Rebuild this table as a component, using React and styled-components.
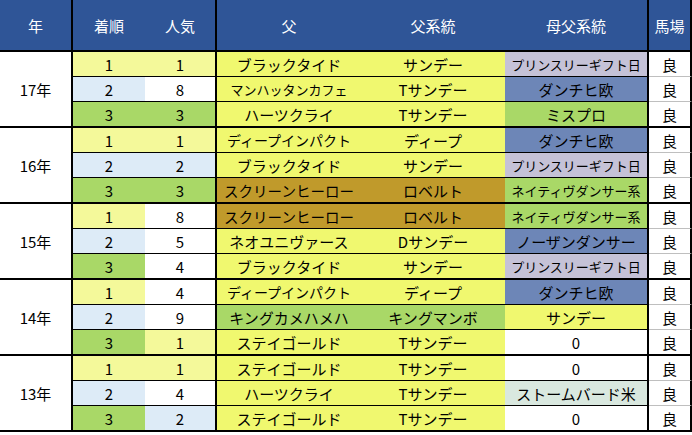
import React from 'react';
import styled, { createGlobalStyle } from 'styled-components';

const GlobalStyle = createGlobalStyle`
  html, body { margin: 0; padding: 0; background: #ffffff; }
  body { font-family: "Noto Sans CJK JP", "Noto Sans", sans-serif; }
`;

const C = {
  ly: '#F4F99A',
  y: '#F0F86F',
  lb: '#DDEBF7',
  g: '#A9D867',
  lav: '#C5C2D7',
  steel: '#6D86B7',
  gold: '#C09A2B',
  pg: '#D9E8DF',
  w: '#FFFFFF',
};

const COLS = '72px 72px 144px 144px 144px 43px';

const Sheet = styled.div`
  width: 692px;
  display: flex;
  flex-direction: column;
  color: #000;
  font-size: 15px;
  background: #fff;
`;

const HeaderRow = styled.div`
  display: grid;
  grid-template-columns: 73px ${COLS};
  height: 52px;
  box-sizing: border-box;
  border-bottom: 2px solid #000;
  background: #2F5597;
`;

const HeadCell = styled.div`
  display: flex;
  align-items: center;
  justify-content: center;
  color: #ffffff;
  font-size: 15px;
  box-sizing: border-box;
  border-right: ${(p) => (p.$edge ? '2px solid #000' : 'none')};
`;

const Group = styled.div`
  display: flex;
  height: 76px;
  box-sizing: border-box;
  border-bottom: 2px solid #000;
`;

const YearCell = styled.div`
  flex: none;
  width: 73px;
  box-sizing: border-box;
  border-right: 2px solid #000;
  background: #fff;
  display: flex;
  align-items: center;
  justify-content: center;
  font-size: 15px;
`;

const Rows = styled.div`
  flex: 1;
  display: flex;
  flex-direction: column;
`;

const Row = styled.div`
  display: grid;
  grid-template-columns: ${COLS};
  height: ${(p) => (p.$last ? 24 : 25)}px;
`;

const Cell = styled.div`
  box-sizing: border-box;
  display: flex;
  align-items: center;
  justify-content: center;
  white-space: nowrap;
  overflow: hidden;
  background: ${(p) => p.$bg};
  font-size: ${(p) => p.$size || 15}px;
  border-bottom: ${(p) => (p.$last ? 'none' : `1px solid ${p.$line || '#000'}`)};
  border-right: ${(p) => (p.$edge ? '2px solid #000' : 'none')};
`;

const headers = [
  { t: '年', edge: true },
  { t: '着順' },
  { t: '人気', edge: true },
  { t: '父' },
  { t: '父系統' },
  { t: '母父系統', edge: true },
  { t: '馬場', edge: true },
];

// [着順, bg], [人気, bg], [父, bg, size], [父系統, bg], [母父系統, bg, size]
const data = [
  {
    year: '17年',
    rows: [
      [['1', 'ly'], ['1', 'ly'], ['ブラックタイド', 'y'], ['サンデー', 'y'], ['プリンスリーギフト日', 'lav', 13]],
      [['2', 'lb'], ['8', 'w'], ['マンハッタンカフェ', 'y', 13], ['Tサンデー', 'y'], ['ダンチヒ欧', 'steel']],
      [['3', 'g'], ['3', 'g'], ['ハーツクライ', 'y'], ['Tサンデー', 'y'], ['ミスプロ', 'g']],
    ],
  },
  {
    year: '16年',
    rows: [
      [['1', 'ly'], ['1', 'ly'], ['ディープインパクト', 'y', 14], ['ディープ', 'y'], ['ダンチヒ欧', 'steel']],
      [['2', 'lb'], ['2', 'lb'], ['ブラックタイド', 'y'], ['サンデー', 'y'], ['プリンスリーギフト日', 'lav', 13]],
      [['3', 'g'], ['3', 'g'], ['スクリーンヒーロー', 'gold', 14.5], ['ロベルト', 'gold'], ['ネイティヴダンサー系', 'g', 13]],
    ],
  },
  {
    year: '15年',
    rows: [
      [['1', 'ly'], ['8', 'w'], ['スクリーンヒーロー', 'gold', 14.5], ['ロベルト', 'gold'], ['ネイティヴダンサー系', 'g', 13]],
      [['2', 'lb'], ['5', 'w'], ['ネオユニヴァース', 'y'], ['Dサンデー', 'y'], ['ノーザンダンサー', 'steel']],
      [['3', 'g'], ['4', 'w'], ['ブラックタイド', 'y'], ['サンデー', 'y'], ['プリンスリーギフト日', 'lav', 13]],
    ],
  },
  {
    year: '14年',
    rows: [
      [['1', 'ly'], ['4', 'w'], ['ディープインパクト', 'y', 14], ['ディープ', 'y'], ['ダンチヒ欧', 'steel']],
      [['2', 'lb'], ['9', 'w'], ['キングカメハメハ', 'g'], ['キングマンボ', 'g'], ['サンデー', 'y']],
      [['3', 'g'], ['1', 'ly'], ['ステイゴールド', 'y'], ['Tサンデー', 'y'], ['0', 'w']],
    ],
  },
  {
    year: '13年',
    rows: [
      [['1', 'ly'], ['1', 'ly'], ['ステイゴールド', 'y'], ['Tサンデー', 'y'], ['0', 'w']],
      [['2', 'lb'], ['4', 'w'], ['ハーツクライ', 'y'], ['Tサンデー', 'y'], ['ストームバード米', 'pg']],
      [['3', 'g'], ['2', 'lb'], ['ステイゴールド', 'y'], ['Tサンデー', 'y'], ['0', 'w']],
    ],
  },
];

const edgeCols = [false, true, false, false, true];

export default function App() {
  return (
    <>
      <GlobalStyle />
      <Sheet>
        <HeaderRow>
          {headers.map((h) => (
            <HeadCell key={h.t} $edge={h.edge}>
              {h.t}
            </HeadCell>
          ))}
        </HeaderRow>
        {data.map((g) => (
          <Group key={g.year}>
            <YearCell>{g.year}</YearCell>
            <Rows>
              {g.rows.map((r, ri) => {
                const last = ri === g.rows.length - 1;
                return (
                  <Row key={ri} $last={last}>
                    {r.map((c, ci) => (
                      <Cell key={ci} $bg={C[c[1]]} $size={c[2]} $last={last} $edge={edgeCols[ci]}>
                        {c[0]}
                      </Cell>
                    ))}
                    <Cell $bg="#fff" $last={last} $edge $line="#BFBFBF">
                      良
                    </Cell>
                  </Row>
                );
              })}
            </Rows>
          </Group>
        ))}
      </Sheet>
    </>
  );
}
